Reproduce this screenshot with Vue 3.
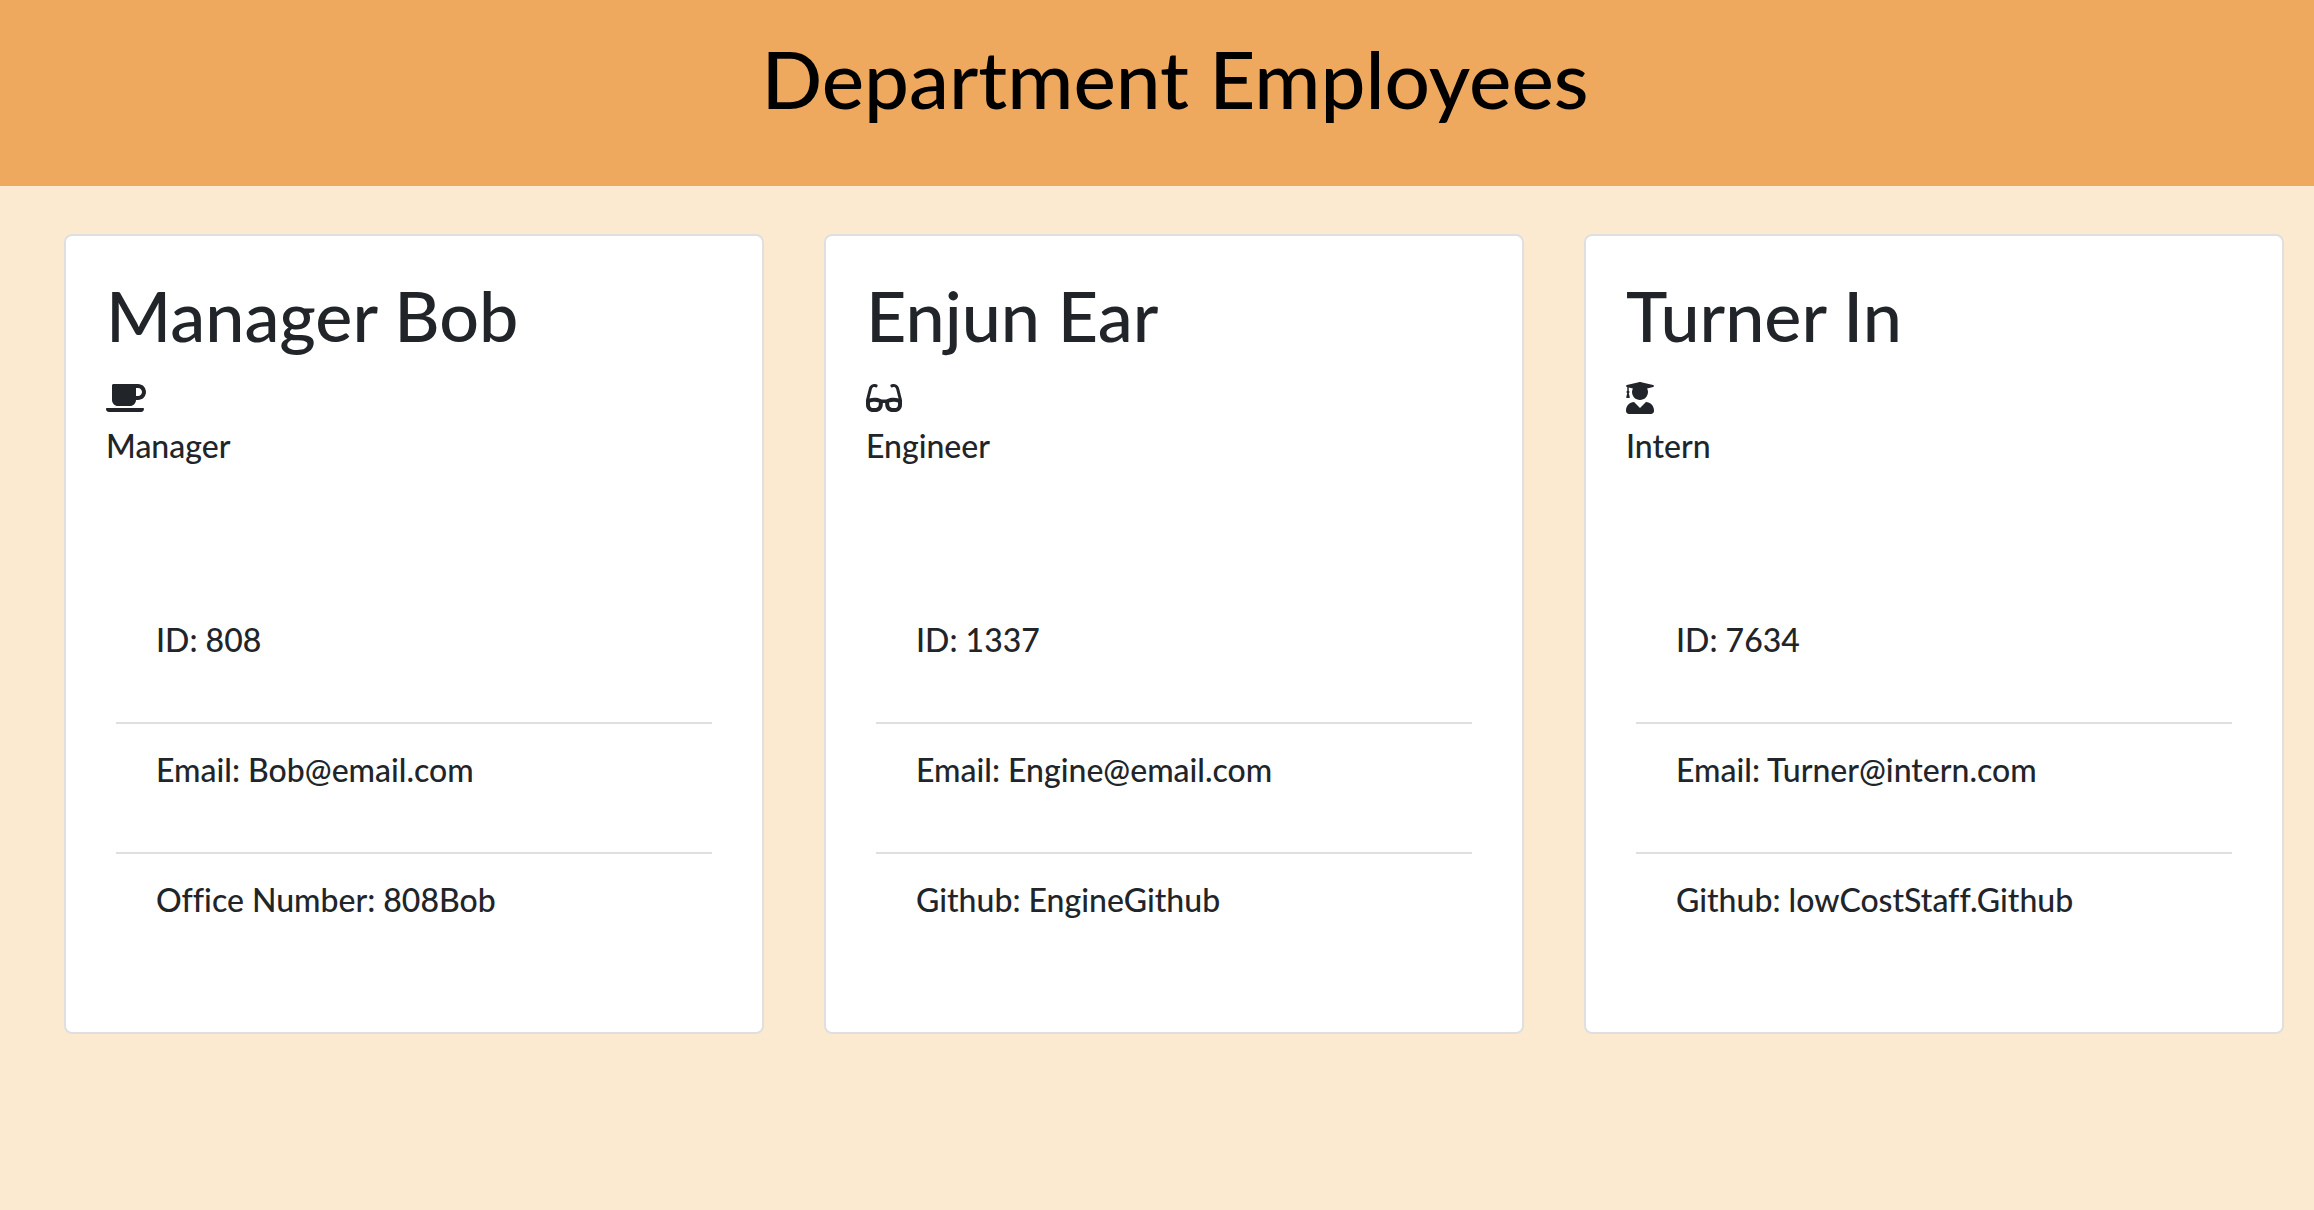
<script setup>
const icons = {
  mug: {
    width: 640,
    path: 'M192 384h192c53 0 96-43 96-96h32c70.6 0 128-57.4 128-128S582.6 32 512 32H120c-13.3 0-24 10.7-24 24v232c0 53 43 96 96 96zM512 96c35.3 0 64 28.7 64 64s-28.7 64-64 64h-32V96h32zm47.7 384H48.3c-47.6 0-61-64-36-64h583.3c25 0 11.8 64-35.9 64z',
  },
  glasses: {
    width: 576,
    path: 'M574.1 280.37L528.75 98.66c-5.91-23.7-21.59-44.05-43-55.81-21.44-11.73-46.97-14.11-70.19-6.33l-15.25 5.08c-8.39 2.79-12.92 11.86-10.12 20.24l5.06 15.18c2.79 8.38 11.85 12.91 20.23 10.12l13.18-4.39c10.87-3.62 23-3.57 33.16 1.73 10.29 5.37 17.57 14.56 20.37 25.82l38.46 153.82c-22.19-6.81-49.79-12.46-81.2-12.46-34.77 0-73.98 7.02-114.85 26.74h-73.18c-40.87-19.74-80.08-26.75-114.86-26.75-31.42 0-59.02 5.65-81.21 12.46l38.46-153.83c2.79-11.25 10.09-20.45 20.38-25.81 10.16-5.3 22.28-5.35 33.15-1.73l13.17 4.39c8.38 2.79 17.44-1.74 20.23-10.12l5.06-15.18c2.8-8.38-1.73-17.45-10.12-20.24l-15.25-5.08c-23.22-7.78-48.75-5.41-70.19 6.33-21.41 11.77-37.09 32.11-43 55.8L1.9 280.37A64.218 64.218 0 0 0 0 295.86v70.25C0 429.01 51.58 480 115.2 480h37.12c60.28 0 110.37-45.94 114.88-105.37l2.93-38.63h35.75l2.93 38.63C313.31 434.06 363.4 480 423.68 480h37.12c63.62 0 115.2-50.99 115.2-113.88v-70.25c0-5.23-.64-10.43-1.9-15.5zm-370.72 89.42c-1.97 25.91-24.4 46.21-51.06 46.21H115.2C86.97 416 64 393.62 64 366.11v-37.54c18.12-6.49 43.42-12.92 72.58-12.92 23.86 0 47.26 4.33 69.93 12.92l-3.13 41.22zM512 366.12c0 27.51-22.97 49.88-51.2 49.88h-37.12c-26.67 0-49.1-20.3-51.06-46.21l-3.13-41.22c22.67-8.59 46.08-12.92 69.95-12.92 29.12 0 54.43 6.44 72.56 12.93v37.54z',
  },
  graduate: {
    width: 448,
    path: 'M319.4 320.6L224 416l-95.4-95.4C57.1 323.7 0 382.2 0 454.4v9.6c0 26.5 21.5 48 48 48h352c26.5 0 48-21.5 48-48v-9.6c0-72.2-57.1-130.7-128.6-133.8zM13.6 79.8l6.4 1.5v58.4c-7 4.2-12 11.5-12 20.3 0 8.4 4.6 15.4 11.1 19.7L3.5 242c-1.7 6.9 2.1 14 7.6 14h41.8c5.5 0 9.3-7.1 7.6-14l-15.6-62.3C51.4 175.4 56 168.4 56 160c0-8.8-5-16.1-12-20.3V87.1l66 15.9c-8.6 17.2-14 36.4-14 57 0 70.7 57.3 128 128 128s128-57.3 128-128c0-20.6-5.3-39.8-14-57l96.3-23.2c18.2-4.4 18.2-27.1 0-31.5l-190.4-46c-13-3.1-26.7-3.1-39.7 0L13.6 48.2c-18.1 4.4-18.1 27.2 0 31.6z',
  },
}

const employees = [
  {
    name: 'Manager Bob',
    role: 'Manager',
    icon: icons.mug,
    details: ['ID: 808', 'Email: Bob@email.com', 'Office Number: 808Bob'],
  },
  {
    name: 'Enjun Ear',
    role: 'Engineer',
    icon: icons.glasses,
    details: ['ID: 1337', 'Email: Engine@email.com', 'Github: EngineGithub'],
  },
  {
    name: 'Turner In',
    role: 'Intern',
    icon: icons.graduate,
    details: ['ID: 7634', 'Email: Turner@intern.com', 'Github: lowCostStaff.Github'],
  },
]
</script>

<template>
  <div class="page">
    <header class="banner">
      <h1>Department Employees</h1>
    </header>
    <main class="team">
      <article v-for="person in employees" :key="person.name" class="card">
        <h2>{{ person.name }}</h2>
        <div class="icon-row">
          <svg :viewBox="`0 0 ${person.icon.width} 512`" aria-hidden="true">
            <path :d="person.icon.path" fill="currentColor" />
          </svg>
        </div>
        <p class="role">{{ person.role }}</p>
        <ul class="details">
          <li v-for="detail in person.details" :key="detail">{{ detail }}</li>
        </ul>
      </article>
    </main>
  </div>
</template>

<style>
body {
  margin: 0;
  background: #fcead0;
}
</style>

<style scoped>
.page {
  font-family: Lato, sans-serif;
  font-size: 32px;
  font-weight: 500;
  font-variant-ligatures: none;
  line-height: 48px;
  color: #212529;
}

.banner {
  padding: 30px 0 60px 36px;
  background: #eea95e;
  color: #000;
  text-align: center;
}

h1,
h2 {
  margin: 0;
  font-weight: 500;
}

h1 {
  font-size: 80px;
  line-height: 96px;
}

.team {
  display: grid;
  grid-template-columns: repeat(3, minmax(0, 1fr));
  gap: 60px;
  padding: 48px 30px 48px 64px;
}

.card {
  padding: 36px 40px 50px;
  border: 2px solid #dfdfdf;
  border-radius: 8px;
  background: #fff;
}

h2 {
  margin-bottom: 16px;
  font-size: 70px;
  line-height: 86px;
}

.icon-row {
  display: flex;
  align-items: center;
  height: 48px;
}

.icon-row svg {
  height: 32px;
}

.role {
  margin: 0 0 124px;
}

.details {
  margin: 0 10px;
  padding: 0;
  list-style: none;
}

.details li {
  padding: 22px 40px 58px;
}

.details li:not(:last-child) {
  border-bottom: 2px solid #dfdfdf;
}
</style>
